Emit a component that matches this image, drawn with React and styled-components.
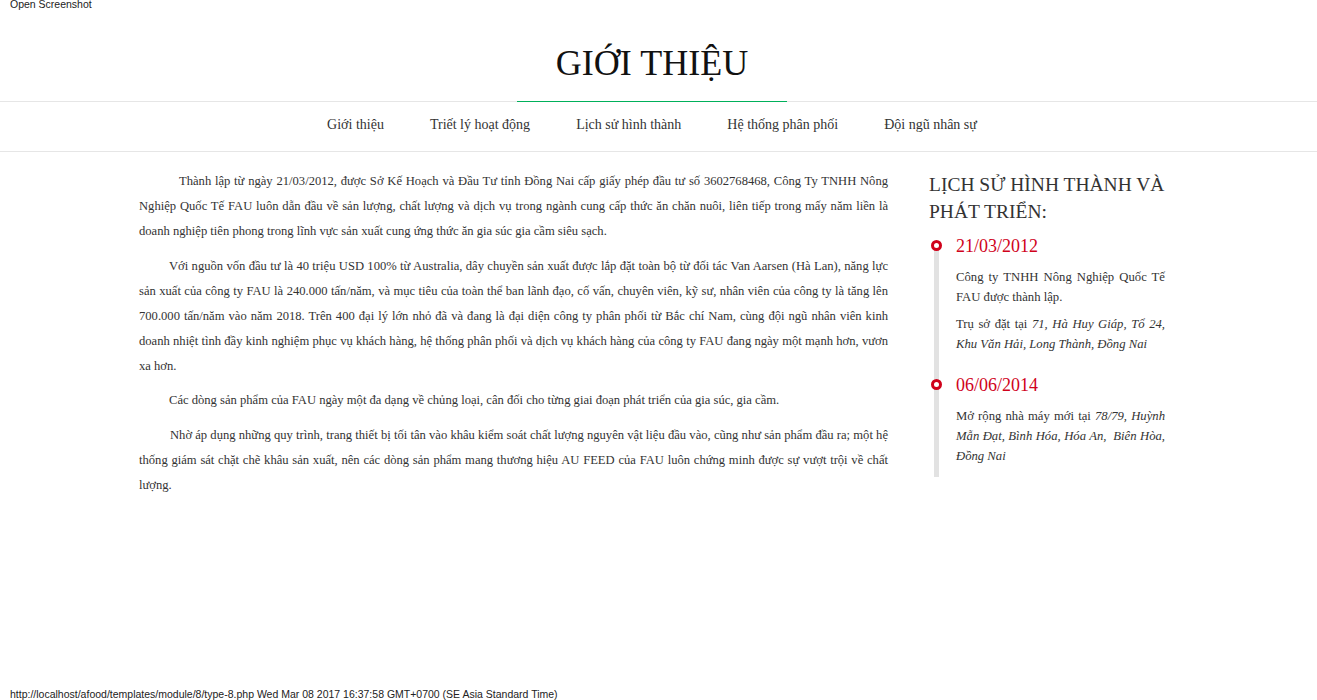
import React from "react";
import styled, { createGlobalStyle } from "styled-components";

const GlobalStyle = createGlobalStyle`
  html, body { margin: 0; padding: 0; background: #fff; }
  body { font-family: "Liberation Serif", "Times New Roman", serif; color: #333; }
  * { box-sizing: border-box; }
`;

const Page = styled.div`
  min-height: 100vh;
  display: flex;
  flex-direction: column;
`;

const Caption = styled.div`
  font-family: "Liberation Sans", Arial, sans-serif;
  font-size: 10.5px;
  line-height: 12px;
  color: #222;
  padding-left: 10px;
`;

const TopCaption = styled(Caption)`
  margin-top: -2px;
`;

const FootCaption = styled(Caption)`
  margin-top: auto;
`;

const Band = styled.div`
  padding-right: 13px;
`;

const Title = styled.h1`
  position: relative;
  z-index: 1;
  width: 270px;
  margin: 35px auto -1px;
  padding-bottom: 20px;
  font-size: 36px;
  line-height: 36px;
  font-weight: normal;
  text-align: center;
  color: #111;
  border-bottom: 1px solid #00b05a;
`;

const NavBand = styled(Band)`
  border-top: 1px solid #e6e6e6;
  border-bottom: 1px solid #e6e6e6;
`;

const Nav = styled.nav`
  display: flex;
  justify-content: center;
  align-items: center;
  height: 49px;
  padding-bottom: 4px;
`;

const NavLink = styled.a`
  padding: 0 23px;
  font-size: 14px;
  color: #333;
  text-decoration: none;
  cursor: pointer;
`;

const Container = styled.div`
  width: 1026px;
  margin: 0 auto;
  padding-top: 17px;
  display: grid;
  grid-template-columns: 749px 236px;
  column-gap: 41px;
`;

const Article = styled.div`
  font-size: 12.6px;
  line-height: 25px;
  text-align: justify;
`;

const Para = styled.p`
  margin: 0 0 9.5px;
  text-indent: ${(p) => p.$indent}px;
`;

const Aside = styled.aside`
  padding-top: 2px;
`;

const AsideTitle = styled.h3`
  margin: 0 0 11px;
  font-size: 19.5px;
  line-height: 27px;
  font-weight: normal;
  text-transform: uppercase;
  color: #333;
`;

const Timeline = styled.ul`
  position: relative;
  list-style: none;
  margin: 0 0 0 5px;
  padding: 0 0 11px 22px;

  &::before {
    content: "";
    position: absolute;
    left: 0;
    top: 6px;
    bottom: 0;
    width: 5px;
    background: #e2e2e2;
  }
`;

const Item = styled.li`
  position: relative;
  margin-bottom: ${(p) => (p.$last ? 0 : 21)}px;
`;

const Dot = styled.span`
  position: absolute;
  left: -25px;
  top: 4px;
  width: 11px;
  height: 11px;
  border-radius: 50%;
  border: 3px solid #d0021b;
  background: #fff;
`;

const Date = styled.div`
  font-size: 18px;
  line-height: 20px;
  color: #d0021b;
  margin-bottom: 11px;
`;

const ItemText = styled.p`
  margin: 0 0 7px;
  font-size: 12.7px;
  line-height: 20px;
  text-align: justify;
  color: #333;
  &:last-child { margin-bottom: 0; }
`;

const events = [
  {
    date: "21/03/2012",
    body: [
      <>Công ty TNHH Nông Nghiệp Quốc Tế FAU được thành lập.</>,
      <>
        Trụ sở đặt tại <em>71, Hà Huy Giáp, Tổ 24, Khu Văn Hải, Long Thành, Đồng Nai</em>
      </>,
    ],
  },
  {
    date: "06/06/2014",
    body: [
      <>
        Mở rộng nhà máy mới tại <em>78/79, Huỳnh Mẫn Đạt, Bình Hóa, Hóa An,&nbsp; Biên Hòa, Đồng Nai</em>
      </>,
    ],
  },
];

const navItems = [
  "Giới thiệu",
  "Triết lý hoạt động",
  "Lịch sử hình thành",
  "Hệ thống phân phối",
  "Đội ngũ nhân sự",
];

export default function App() {
  return (
    <Page>
      <GlobalStyle />
      <TopCaption>Open Screenshot</TopCaption>
      <Band>
        <Title>GIỚI THIỆU</Title>
      </Band>
      <NavBand>
        <Nav>
          {navItems.map((n) => (
            <NavLink key={n}>{n}</NavLink>
          ))}
        </Nav>
      </NavBand>
      <Band>
        <Container>
          <Article>
            <Para $indent={40}>
              Thành lập từ ngày 21/03/2012, được Sở Kế Hoạch và Đầu Tư tỉnh Đồng Nai cấp giấy phép đầu tư số 3602768468, Công Ty TNHH Nông Nghiệp Quốc Tế FAU luôn dẫn đầu về sản lượng, chất lượng và dịch vụ trong ngành cung cấp thức ăn chăn nuôi, liên tiếp trong mấy năm liền là doanh nghiệp tiên phong trong lĩnh vực sản xuất cung ứng thức ăn gia súc gia cầm siêu sạch.
            </Para>
            <Para $indent={30}>
              Với nguồn vốn đầu tư là 40 triệu USD 100% từ Australia, dây chuyền sản xuất được lắp đặt toàn bộ từ đối tác Van Aarsen (Hà Lan), năng lực sản xuất của công ty FAU là 240.000 tấn/năm, và mục tiêu của toàn thể ban lãnh đạo, cố vấn, chuyên viên, kỹ sư, nhân viên của công ty là tăng lên 700.000 tấn/năm vào năm 2018. Trên 400 đại lý lớn nhỏ đã và đang là đại diện công ty phân phối từ Bắc chí Nam, cùng đội ngũ nhân viên kinh doanh nhiệt tình đầy kinh nghiệm phục vụ khách hàng, hệ thống phân phối và dịch vụ khách hàng của công ty FAU đang ngày một mạnh hơn, vươn xa hơn.
            </Para>
            <Para $indent={30}>
              Các dòng sản phẩm của FAU ngày một đa dạng về chủng loại, cân đối cho từng giai đoạn phát triển của gia súc, gia cầm.
            </Para>
            <Para $indent={31}>
              Nhờ áp dụng những quy trình, trang thiết bị tối tân vào khâu kiểm soát chất lượng nguyên vật liệu đầu vào, cũng như sản phẩm đầu ra; một hệ thống giám sát chặt chẽ khâu sản xuất, nên các dòng sản phẩm mang thương hiệu AU FEED của FAU luôn chứng minh được sự vượt trội về chất lượng.
            </Para>
          </Article>
          <Aside>
            <AsideTitle>Lịch sử hình thành và phát triển:</AsideTitle>
            <Timeline>
              {events.map((e, i) => (
                <Item key={e.date} $last={i === events.length - 1}>
                  <Dot />
                  <Date>{e.date}</Date>
                  {e.body.map((b, j) => (
                    <ItemText key={j}>{b}</ItemText>
                  ))}
                </Item>
              ))}
            </Timeline>
          </Aside>
        </Container>
      </Band>
      <FootCaption>
        http://localhost/afood/templates/module/8/type-8.php Wed Mar 08 2017 16:37:58 GMT+0700 (SE Asia Standard Time)
      </FootCaption>
    </Page>
  );
}
